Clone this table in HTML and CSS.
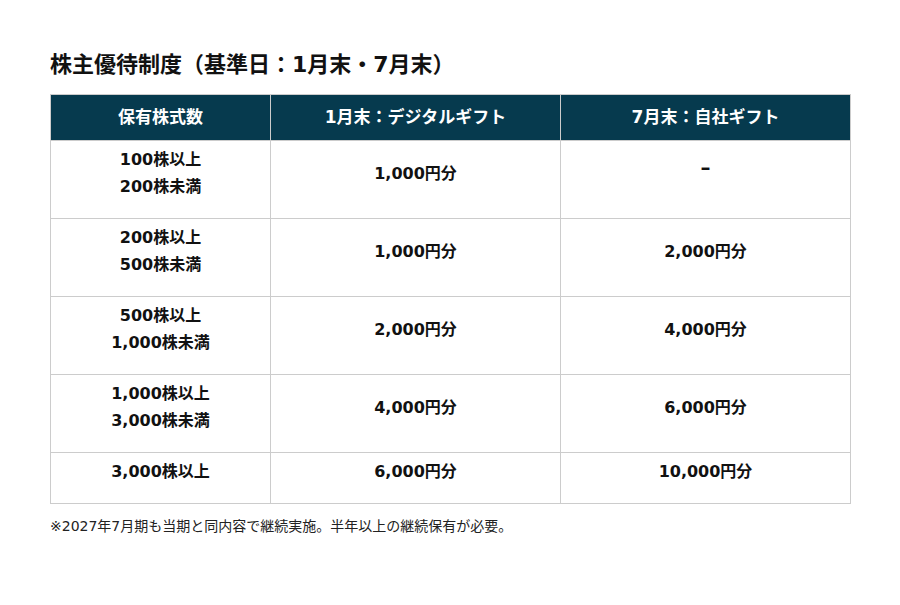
FILE: index.html
```html
<!DOCTYPE html>
<html lang="ja">
<head>
<meta charset="utf-8">
<link rel="stylesheet" href="styles.css">
</head>
<body>
<div class="wrap">
  <h2 class="title">株主優待制度（基準日：1月末・7月末）</h2>
  <table class="benefits">
    <colgroup>
      <col class="c1"><col class="c2"><col class="c3">
    </colgroup>
    <thead>
      <tr><th>保有株式数</th><th>1月末：デジタルギフト</th><th>7月末：自社ギフト</th></tr>
    </thead>
    <tbody>
      <tr><td>100株以上<br>200株未満</td><td>1,000円分</td><td class="dash">–</td></tr>
      <tr><td>200株以上<br>500株未満</td><td>1,000円分</td><td>2,000円分</td></tr>
      <tr><td>500株以上<br>1,000株未満</td><td>2,000円分</td><td>4,000円分</td></tr>
      <tr><td>1,000株以上<br>3,000株未満</td><td>4,000円分</td><td>6,000円分</td></tr>
      <tr><td>3,000株以上</td><td>6,000円分</td><td>10,000円分</td></tr>
    </tbody>
  </table>
  <p class="note">※2027年7月期も当期と同内容で継続実施。半年以上の継続保有が必要。</p>
</div>
</body>
</html>
```

FILE: styles.css
```css
html, body {
  margin: 0;
  padding: 0;
  background: #fff;
}
body {
  font-family: "DejaVu Sans", "Noto Sans CJK JP", sans-serif;
  color: #111;
}
.wrap {
  padding: 50px 50px 0;
  width: 800px;
}
.title {
  margin: 0 0 14px;
  font-size: 22px;
  line-height: 30px;
  font-weight: bold;
  color: #111;
}
.benefits {
  width: 800px;
  border-collapse: collapse;
  table-layout: fixed;
}
.c1 { width: 220px; }
.c2 { width: 290px; }
.c3 { width: 290px; }
.benefits th {
  background: #063a4e;
  color: #fff;
  font-size: 17px;
  font-weight: bold;
  line-height: 27px;
  padding: 9px 10px 9px;
  border: 1px solid #ccc;
  text-align: center;
}
.benefits td {
  font-size: 16px;
  font-weight: bold;
  line-height: 27px;
  padding: 5px 10px 18px;
  border: 1px solid #ccc;
  text-align: center;
  vertical-align: middle;
  color: #111;
}
.benefits td.dash {
  padding-bottom: 30px;
  font-size: 20px;
}
.note {
  margin: 12px 0 0;
  font-size: 14px;
  line-height: 20px;
  color: #222;
}
```
